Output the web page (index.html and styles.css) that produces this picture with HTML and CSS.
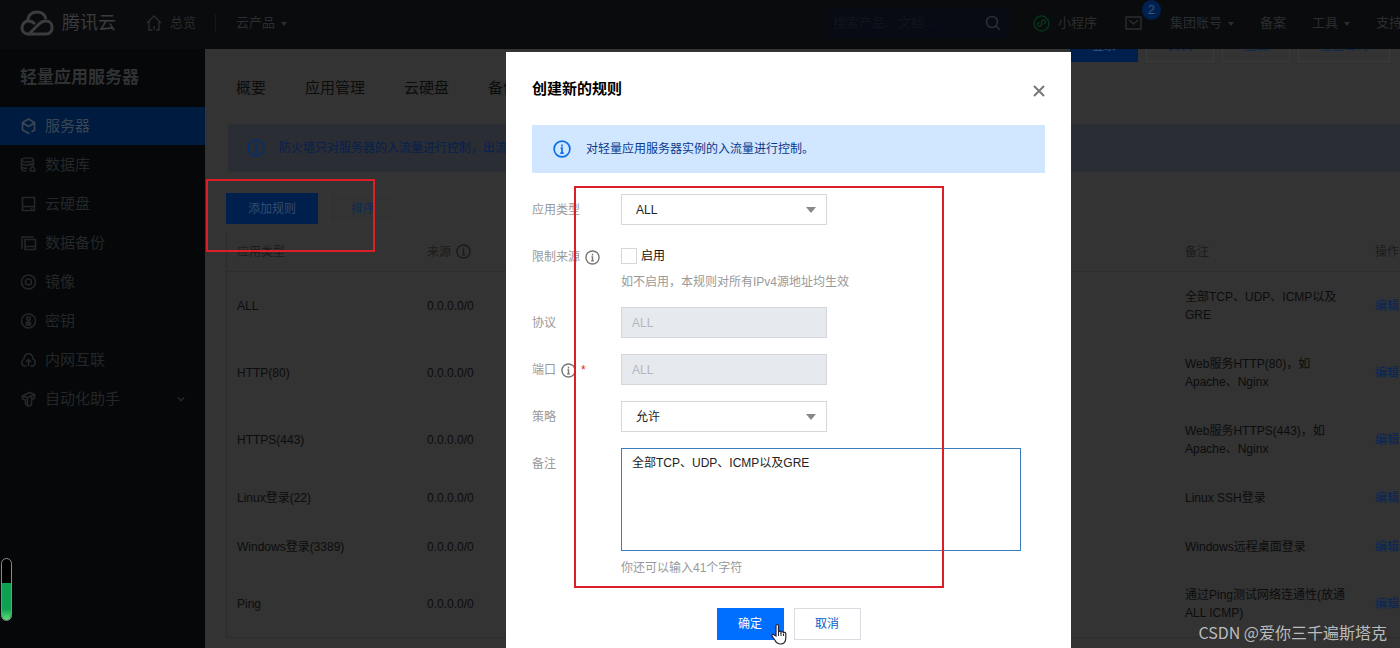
FILE: index.html
```html
<!DOCTYPE html>
<html lang="zh-CN">
<head>
<meta charset="utf-8">
<title>轻量应用服务器</title>
<link rel="stylesheet" href="styles.css">
</head>
<body>
<svg class="defs" aria-hidden="true">
  <symbol id="info" viewBox="0 0 16 16"><circle cx="8" cy="8" r="7" fill="none" stroke="currentColor" stroke-width="1.5"/><path d="M8 4v1.800M6.800 7.300H8v4M6.500 11.600h3" fill="none" stroke="currentColor" stroke-width="1.500"/></symbol>
</svg>
<div class="app">
  <header class="topbar">
    <a class="brand" href="#">
      <svg width="34" height="26" viewBox="0 0 34 26" fill="none" stroke="currentColor" stroke-width="3"><path d="M8 10C8 5 12 2 17 2s8 3 9 7"/><path d="M10 24H8a6 6 0 0 1-6-6c0-4 3-7 6-7 3 0 5 1 7 3"/><path d="M8 24h18a6 6 0 0 0 6-7c0-4-3-6-6-6-3 0-5 1-7 3L9 24"/></svg>
      <span>腾讯云</span>
    </a>
    <a class="home" href="#">
      <svg width="16" height="16" viewBox="0 0 16 16" fill="none" stroke="currentColor" stroke-width="1.4"><path d="M1 8l7-7 7 7M3 6v9h3m7-9v9h-3M8 11v4"/></svg>
      <span>总览</span>
    </a>
    <a class="products caret" href="#">云产品</a>
    <div class="search">
      <input type="text" aria-label="搜索" placeholder="搜索产品、文档...">
      <svg width="16" height="16" viewBox="0 0 16 16" fill="none" stroke="currentColor" stroke-width="1.6"><circle cx="7" cy="7" r="5.5"/><path d="M11 11l4 4"/></svg>
    </div>
    <nav class="tools">
      <a class="mini" href="#"><svg width="17" height="17" viewBox="0 0 17 17" fill="none" stroke="#07341b" stroke-width="1.5"><circle cx="8.500" cy="8.500" r="7.500"/><path d="M6.500 8C4.500 8 4 9 4.500 10.500c.8 1.500 4 1.200 4-1V7c0-2.500 3-2.500 4-1 .5 1.500-.3 2.700-2 2.700"/></svg>小程序</a>
      <a class="mail" href="#" aria-label="消息"><svg width="17" height="14" viewBox="0 0 17 14" fill="none" stroke="currentColor" stroke-width="1.4"><path d="M1 1h15v12H1zM4 4l4.500 4L13 4"/></svg><b>2</b></a>
      <a class="caret" href="#">集团账号</a>
      <a href="#">备案</a>
      <a class="caret" href="#">工具</a>
      <a class="support" href="#">支持</a>
    </nav>
  </header>
  <div class="body">
    <aside class="side">
      <h1>轻量应用服务器</h1>
      <nav>
        <a class="on" href="#"><svg viewBox="0 0 16 16"><path d="M9 15l-1 .3L2 12V4.500L8 1l6 3.500V12l-3 1.700M2 4.800L8 8.500l6-3.700"/></svg>服务器</a>
        <a href="#"><svg viewBox="0 0 16 16"><ellipse cx="7" cy="3" rx="6" ry="2"/><path d="M1 3v9c0 1 2 2 5 2M13 3v5M1 6.500c1 2 8 2 12 0M1 10c1 1 4 1.500 6 1M12 9c-2 3-3 3-2 5h4.500c1-2-1-3-2.500-5z"/></svg>数据库</a>
        <a href="#"><svg viewBox="0 0 16 16"><path d="M2 1.500h12v13H2zM2 10.500h12M10 12.500h2"/></svg>云硬盘</a>
        <a href="#"><svg viewBox="0 0 16 16"><path d="M1.500 14V2H13M4.500 4.500H15v10H4.500zM4.500 11.500H15"/></svg>数据备份</a>
        <a href="#"><svg viewBox="0 0 16 16"><circle cx="8" cy="8" r="7"/><circle cx="8" cy="8" r="3"/></svg>镜像</a>
        <a href="#"><svg viewBox="0 0 16 16"><circle cx="8" cy="8" r="7"/><circle cx="8" cy="5.500" r="1.700"/><path d="M8 7v5M6 12V9.500h4V12z"/></svg>密钥</a>
        <a href="#"><svg viewBox="0 0 16 16"><path d="M6 14H4c-4-1-3-6-.5-7C4 0 12 0 12.500 7c3 1 3 6-.5 7h-2M8 14V8M5.500 10L8 7.500l2.500 2.500"/></svg>内网互联</a>
        <a href="#"><svg viewBox="0 0 16 16"><path d="M2 5l7-3.500 5 2-7 3zM2 5v3l3 1v4l3 2 3-1V9l3-2V3.500M7 6.500V14M11 8V5"/></svg>自动化助手<svg class="chev" viewBox="0 0 8 8"><path d="M1 2.500l3 3 3-3"/></svg></a>
      </nav>
    </aside>
    <main class="main">
      <div class="actions">
        <button class="btn primary">登录</button><button class="btn">关机</button><button class="btn">重启</button><button class="btn wide">重置密码</button>
      </div>
      <nav class="tabs"><a href="#">概要</a><a href="#">应用管理</a><a href="#">云硬盘</a><a href="#">备份</a></nav>
      <div class="notice"><svg width="18" height="18"><use href="#info"/></svg>防火墙只对服务器的入流量进行控制，出流量默认允许</div>
      <div class="bar"><button class="add">添加规则</button><button class="sort">排序</button></div>
      <table class="rules">
        <colgroup><col class="c-type"><col><col class="c-note"><col class="c-op"></colgroup>
        <thead><tr><th>应用类型</th><th><span class="src">来源 <svg width="15" height="15"><use href="#info"/></svg></span></th><th>备注</th><th>操作</th></tr></thead>
        <tbody>
          <tr><td>ALL</td><td>0.0.0.0/0</td><td>全部TCP、UDP、ICMP以及GRE</td><td><a href="#">编辑</a></td></tr>
          <tr><td>HTTP(80)</td><td>0.0.0.0/0</td><td>Web服务HTTP(80)，如 Apache、Nginx</td><td><a href="#">编辑</a></td></tr>
          <tr><td>HTTPS(443)</td><td>0.0.0.0/0</td><td>Web服务HTTPS(443)，如 Apache、Nginx</td><td><a href="#">编辑</a></td></tr>
          <tr class="one"><td>Linux登录(22)</td><td>0.0.0.0/0</td><td>Linux SSH登录</td><td><a href="#">编辑</a></td></tr>
          <tr class="one"><td>Windows登录(3389)</td><td>0.0.0.0/0</td><td>Windows远程桌面登录</td><td><a href="#">编辑</a></td></tr>
          <tr><td>Ping</td><td>0.0.0.0/0</td><td>通过Ping测试网络连通性(放通ALL ICMP)</td><td><a href="#">编辑</a></td></tr>
        </tbody>
      </table>
    </main>
  </div>

  <section class="modal" role="dialog" aria-labelledby="dlg">
    <div class="modal-head">
      <h2 id="dlg">创建新的规则</h2>
      <button class="close" aria-label="关闭"><svg width="12" height="12" viewBox="0 0 12 12"><path d="M1 1l10 10M11 1L1 11" stroke="currentColor" stroke-width="2"/></svg></button>
    </div>
    <div class="tip"><svg width="18" height="18"><use href="#info"/></svg>对轻量应用服务器实例的入流量进行控制。</div>
    <form class="form">
      <label for="type">应用类型</label>
      <div class="pick"><select id="type"><option>ALL</option></select></div>
      <label for="limit">限制来源 <svg width="15" height="15"><use href="#info"/></svg></label>
      <div class="limit">
        <div class="check"><input type="checkbox" id="limit"><label for="limit">启用</label></div>
        <p>如不启用，本规则对所有IPv4源地址均生效</p>
      </div>
      <label for="proto">协议</label>
      <input class="text" id="proto" type="text" value="ALL" disabled>
      <label for="port">端口 <svg width="15" height="15"><use href="#info"/></svg><i>*</i></label>
      <input class="text" id="port" type="text" value="ALL" disabled>
      <label for="policy">策略</label>
      <div class="pick"><select id="policy"><option>允许</option></select></div>
      <label for="note">备注</label>
      <div class="note">
        <textarea id="note">全部TCP、UDP、ICMP以及GRE</textarea>
        <p>你还可以输入41个字符</p>
      </div>
    </form>
    <div class="foot"><button class="ok">确定</button><button class="cancel">取消</button></div>
  </section>

  <div class="mark mark-add"></div>
  <div class="mark mark-form"></div>
  <div class="meter"><span></span></div>
  <svg class="hand" width="16" height="22" viewBox="0 0 16 22"><path d="M5 13V3c0-2 2.500-2 2.500 0v6c.3-1.300 2.300-1.200 2.500.2.500-1 2.300-.8 2.500.5.700-.8 2.300-.4 2.300 1V15c0 3.500-2 6-5 6-3.500 0-4.800-1.500-6-4L1 13c-.5-1.500 1.500-2 2.300-1z" fill="#fff" stroke="#223" stroke-width="1.200"/><path d="M7.500 9v4M10 10v3M12.500 11v2" stroke="#223" stroke-width="1"/></svg>
  <div class="watermark">CSDN @爱你三千遍斯塔克</div>
</div>
</body>
</html>
```
FILE: styles.css
```css
* { box-sizing: border-box; }
body {
  margin: 0;
  background: #333;
  font: 12px/18px "Liberation Sans", "Noto Sans CJK SC", sans-serif;
  color: #0c0c0c;
}
a { color: inherit; text-decoration: none; }
button, input, select, textarea { font: inherit; margin: 0; border-radius: 0; }
h1, h2, p { margin: 0; }
.defs { position: absolute; width: 0; height: 0; }
.app {
  position: relative;
  height: 100vh;
  overflow: hidden;
  display: flex;
  flex-direction: column;
}

/* top bar */
.topbar {
  flex: none;
  height: 49px;
  padding: 0 0 3px 20px;
  display: flex;
  align-items: center;
  background: #090b0d;
  color: #2b2e30;
  font-size: 13px;
  white-space: nowrap;
  overflow: hidden;
}
.brand { display: flex; align-items: center; gap: 8px; font-size: 18px; color: #3a3c3e; }
.home { display: flex; align-items: center; gap: 8px; margin-left: 30px; }
.products { margin-left: 19px; padding-left: 20px; border-left: 1px solid #15181b; }
.caret::after {
  content: "";
  display: inline-block;
  margin-left: 6px;
  vertical-align: middle;
  border: 3px solid transparent;
  border-top: 4px solid #2b2e31;
  border-bottom: 0;
}
.search {
  width: 184px;
  height: 30px;
  margin-left: auto;
  padding: 0 8px;
  display: flex;
  align-items: center;
  background: #080b14;
}
.search input {
  flex: 1;
  min-width: 0;
  padding: 0;
  border: 0;
  background: none;
  color: #303336;
}
.search input::placeholder { color: #10151c; opacity: 1; }
.tools { display: flex; align-items: center; gap: 26px; padding-left: 24px; }
.mini { display: flex; align-items: center; gap: 8px; }
.mail { display: flex; position: relative; margin: 0 2px; }
.mail b {
  position: absolute;
  left: 17px;
  top: -16px;
  width: 19px;
  height: 20px;
  border-radius: 10px;
  background: #00204e;
  color: #39577f;
  font-weight: 400;
  line-height: 20px;
  text-align: center;
}
.support { width: 24px; overflow: hidden; }

/* sidebar */
.body { flex: 1; min-height: 0; display: flex; }
.side { flex: none; width: 205px; background: #050709; }
.side h1 {
  height: 58px;
  padding-left: 20px;
  font-size: 17px;
  line-height: 57px;
  color: #303234;
}
.side nav { display: grid; gap: 1px; }
.side nav a {
  display: flex;
  align-items: center;
  gap: 8px;
  height: 38px;
  padding: 0 20px;
  font-size: 15px;
  color: #242729;
}
.side nav .on { background: #001b40; color: #3c4653; }
.side svg {
  width: 17px;
  height: 16px;
  fill: none;
  stroke: currentColor;
  stroke-width: 1.6;
}
.side .chev { width: 8px; height: 8px; margin-left: auto; }

/* page content */
.main { flex: 1; min-width: 0; padding-left: 21px; overflow: hidden; }
.actions {
  height: 13px;
  overflow: hidden;
  display: flex;
  justify-content: flex-end;
  align-items: flex-end;
  gap: 8px;
  padding-right: 10px;
}
.actions .btn {
  width: 68px;
  height: 32px;
  border: 1px solid #3b3b3b;
  background: #333;
  color: #06265a;
}
.actions .primary { background: #001f4d; border-color: #001f4d; color: #39577f; }
.actions .wide { width: 92px; }
.tabs { display: flex; gap: 39px; padding: 17px 0 18px 10px; font-size: 15px; }
.notice {
  margin-left: 2px;
  margin-top: 9px;
  height: 48px;
  padding-left: 19px;
  display: flex;
  align-items: center;
  gap: 14px;
  background: #2a2d33;
  color: #06204f;
}
.notice svg { color: #06306c; }
.bar { display: flex; gap: 10px; padding: 21px 0 8px; }
.bar button { height: 31px; border: 1px solid #363636; background: #333; color: #0b2a5c; }
.bar .add { width: 92px; border-color: #001f4d; background: #001f4d; color: #354d6c; }
.bar .sort { width: 70px; }
.rules {
  width: 100%;
  table-layout: fixed;
  border-spacing: 0;
  border-left: 1px solid #2c2c2c;
}
.c-type, .c-note { width: 190px; }
.c-op { width: 35px; }
.rules th, .rules td {
  height: 67px;
  padding: 0 14px 0 10px;
  text-align: left;
  font-weight: 400;
}
.rules th { height: 40px; color: #1b1b1b; border-bottom: 1px solid #2d2d2d; }
.rules .one td { height: 49px; }
.rules tr > :last-child { padding-right: 0; white-space: nowrap; }
.rules td a { color: #06265a; }
.rules tbody tr:last-child td { border-bottom: 1px solid #2c2c2c; }
.src { display: flex; align-items: center; gap: 5px; }

/* dialog */
.modal {
  position: absolute;
  left: 506px;
  top: 52px;
  width: 565px;
  min-height: calc(100% - 52px);
  padding: 27px 26px 8px;
  background: #fff;
  color: #222;
}
.modal-head { display: flex; justify-content: space-between; height: 46px; }
.modal-head h2 { font-size: 15px; line-height: 20px; color: #000; }
.close {
  width: 12px;
  height: 24px;
  padding: 0;
  border: 0;
  background: none;
  color: #777;
}
.close svg { display: block; margin: auto; }
.tip {
  height: 48px;
  padding-left: 21px;
  display: flex;
  align-items: center;
  gap: 15px;
  background: #d1e6ff;
  color: #0a3a8c;
}
.tip svg { color: #0a6eea; }
.form {
  display: grid;
  grid-template-columns: 89px 1fr;
  row-gap: 16px;
  padding-top: 21px;
}
.form > label {
  display: flex;
  align-items: center;
  gap: 5px;
  height: 32px;
  margin-bottom: -1px;
  white-space: nowrap;
  color: #999;
}
.form > label svg { flex: none; color: #777; }
.form i { color: #e1251b; font-style: normal; }
.pick { position: relative; width: 206px; height: 31px; }
.pick::after {
  content: "";
  position: absolute;
  right: 11px;
  top: 13px;
  border: 5px solid transparent;
  border-top: 6px solid #888;
  border-bottom: 0;
  pointer-events: none;
}
.pick select {
  width: 100%;
  height: 31px;
  padding: 1px 14px 0;
  border: 1px solid #d5d8db;
  background: #fff;
  color: #222;
  appearance: none;
}
.limit { height: 50px; padding-top: 6px; }
.check { display: flex; align-items: center; gap: 4px; color: #111; }
.check input {
  width: 16px;
  height: 16px;
  border: 1px solid #d5d8db;
  background: #fff;
  appearance: none;
}
.limit p, .note p { margin-top: 8px; color: #999; }
.text {
  width: 206px;
  height: 31px;
  padding: 0 10px;
  border: 1px solid #d3d7dc;
  background: #e6e9ee;
  color: #b4b8bd;
}
.note textarea {
  display: block;
  width: 400px;
  height: 103px;
  padding: 5px 10px;
  border: 1px solid #3c7dbb;
  background: #fff;
  color: #222;
  resize: none;
}
.foot { display: flex; justify-content: center; gap: 10px; padding-top: 31px; }
.foot button { width: 67px; height: 32px; border: 1px solid #d9dde1; background: #fff; color: #0a62c8; }
.foot .ok { border-color: #006eff; background: #006eff; color: #fff; }

/* items floating over the page */
.mark { position: absolute; border: 2px solid #dc1f26; pointer-events: none; }
.mark-add { left: 206px; top: 179px; width: 169px; height: 73px; }
.mark-form { left: 574px; top: 186px; width: 370px; height: 402px; }
.meter {
  position: absolute;
  left: 1px;
  top: 558px;
  width: 11px;
  height: 63px;
  display: flex;
  align-items: flex-end;
  border: 1px solid #8a8a8a;
  border-radius: 6px;
  overflow: hidden;
  background: #000;
}
.meter span { width: 100%; height: 37px; background: linear-gradient(#10a052 70%, #5ddc78); }
.hand { position: absolute; left: 771px; top: 623px; }
.watermark {
  position: absolute;
  right: 13px;
  bottom: 4px;
  font: 16px/24px "Noto Sans CJK SC", sans-serif;
  color: #bcbcbc;
}
```
